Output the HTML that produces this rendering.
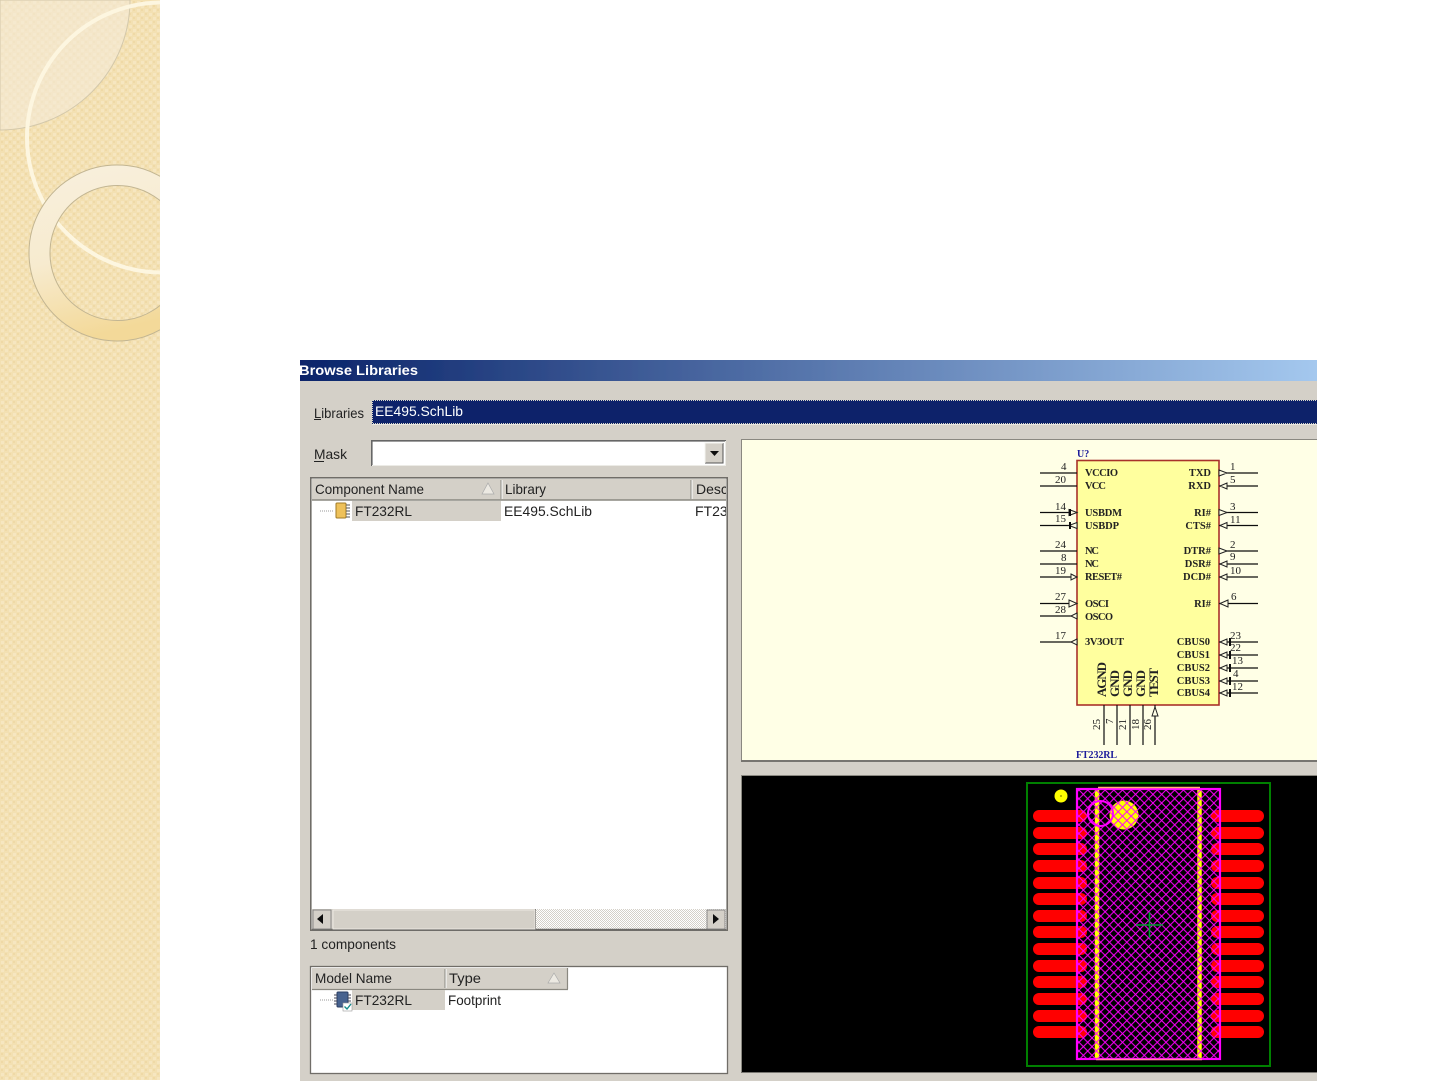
<!DOCTYPE html>
<html>
<head>
<meta charset="utf-8">
<title>Browse Libraries</title>
<style>
html,body{margin:0;padding:0;background:#fff;width:1440px;height:1081px;overflow:hidden}
svg{position:absolute;left:0;top:0;display:block}
.ui{font-family:"Liberation Sans",sans-serif;font-size:14px;fill:#222}
.sp{font-family:"Liberation Serif",serif;font-size:10.5px;font-weight:bold;fill:#222}
.n{font-family:"Liberation Serif",serif;font-size:11px;fill:#222}
</style>
</head>
<body>
<svg width="1440" height="1081" viewBox="0 0 1440 1081" xmlns="http://www.w3.org/2000/svg">
<defs>
<filter id="soft" filterUnits="userSpaceOnUse" x="290" y="350" width="1040" height="740"><feGaussianBlur stdDeviation="0.35"/></filter>
<pattern id="bg" width="8" height="8" patternUnits="userSpaceOnUse">
<rect width="8" height="8" fill="#f3e0b2"/>
<rect x="1" y="1" width="3" height="3" fill="#f6e6c0"/>
<rect x="5" y="5" width="3" height="3" fill="#f6e6c0"/>
<rect x="5" y="1" width="2" height="2" fill="#efd9a6"/>
<rect x="1" y="5" width="2" height="2" fill="#efd9a6"/>
</pattern>
<linearGradient id="ring" x1="0" y1="0" x2="0.25" y2="1">
<stop offset="0" stop-color="#f8f0de"/><stop offset=".55" stop-color="#f7ebcf"/><stop offset="1" stop-color="#f3d999"/>
</linearGradient>
<linearGradient id="title" x1="0" y1="0" x2="1" y2="0">
<stop offset="0" stop-color="#0a246a"/><stop offset="1" stop-color="#a6caf0"/>
</linearGradient>
<pattern id="hatch" width="8.7" height="8.7" patternUnits="userSpaceOnUse" x="1079" y="790">
<path d="M-1 -1L9.700 9.700M9.700 -1L-1 9.700" stroke="#f0f" stroke-width="1" fill="none"/>
</pattern>
<pattern id="dith" width="2" height="2" patternUnits="userSpaceOnUse">
<rect width="2" height="2" fill="#fff"/><rect width="1" height="1" fill="#d4d0c8"/><rect x="1" y="1" width="1" height="1" fill="#d4d0c8"/>
</pattern>
<clipPath id="side"><rect width="160" height="1080"/></clipPath>
<clipPath id="win"><rect x="300" y="360" width="1017" height="721"/></clipPath>
<clipPath id="list1"><rect x="312" y="479" width="414" height="430"/></clipPath>
</defs>

<!-- decorative side band -->
<g clip-path="url(#side)">
<rect width="160" height="1080" fill="url(#bg)"/>
<path d="M0 0H130A130 130 0 0 1 0 130Z" fill="#f3ead6" fill-opacity=".62" stroke="#d3c8ab" stroke-width="1"/>
<circle cx="162" cy="137.500" r="135" fill="none" stroke="#fdf6e0" stroke-width="4"/>
<path fill-rule="evenodd" d="M117 165a88 88 0 1 0 .01 0ZM117.500 185.500a67.500 67.500 0 1 1 -.01 0Z" fill="url(#ring)" stroke="#c2b592" stroke-width="1"/>
</g>

<g clip-path="url(#win)">
<rect x="300" y="360" width="1017" height="721" fill="#d4d0c8"/>
<g filter="url(#soft)">
<rect x="290" y="350" width="1040" height="31" fill="#0a246a"/>
<rect x="300" y="350" width="1030" height="31" fill="url(#title)"/>
<rect x="290" y="381" width="1040" height="710" fill="#d4d0c8"/>
<text x="299" y="375" font-family="Liberation Sans,sans-serif" font-size="14" font-weight="bold" fill="#fff" textLength="119" lengthAdjust="spacingAndGlyphs">Browse Libraries</text>

<!-- libraries -->
<text class="ui" x="314" y="418" textLength="50" lengthAdjust="spacingAndGlyphs">Libraries</text>
<rect x="314" y="419" width="7" height="1" fill="#222"/>
<rect x="372" y="400" width="960" height="24" fill="#0a246a"/>
<path d="M373 400.500H1330M372.500 400V424M373 423.500H1330" stroke="#d8d6c8" stroke-width="1" stroke-dasharray="1 1" fill="none"/>
<path d="M372 424.500H1330" stroke="#e9e7e0"/>
<text x="375" y="416" font-family="Liberation Sans,sans-serif" font-size="14" fill="#fff" textLength="88" lengthAdjust="spacingAndGlyphs">EE495.SchLib</text>

<!-- mask -->
<text class="ui" x="314" y="459" textLength="33" lengthAdjust="spacingAndGlyphs">Mask</text>
<rect x="314" y="461" width="10" height="1" fill="#222"/>
<rect x="371" y="440" width="355" height="26" fill="#fff"/>
<path d="M371.800 466V440.800H726" stroke="#666" stroke-width="1.600" fill="none"/>
<path d="M372 465.500H726M725.500 441V466" stroke="#ecebe6" fill="none"/>
<rect x="705" y="443" width="18" height="20" fill="#d4d0c8"/>
<path d="M723 443V463H705" stroke="#555" fill="none"/>
<path d="M705 463V443H723" stroke="#f5f4f0" fill="none"/>
<path d="M710 451H719L714.500 456Z" fill="#111"/>

<!-- components list -->
<rect x="310.800" y="477.800" width="416.400" height="452.400" fill="#fff" stroke="#6f6d68" stroke-width="1.600"/>
<rect x="312" y="479" width="414" height="21" fill="#d4d0c8"/>
<path d="M312 500H726" stroke="#8a8880" stroke-width="1.400"/>
<path d="M501 480V499M691 480V499" stroke="#8a8880"/>
<path d="M502 480V499M692 480V499" stroke="#fff"/>
<path d="M488 483L494 494H482Z" fill="#ece9e2" stroke="#aaa" stroke-width=".7"/>
<g clip-path="url(#list1)">
<text class="ui" x="315" y="494" textLength="109" lengthAdjust="spacingAndGlyphs">Component Name</text>
<text class="ui" x="505" y="494" textLength="41" lengthAdjust="spacingAndGlyphs">Library</text>
<text class="ui" x="696" y="494">Desc</text>
<rect x="352" y="501" width="149" height="20" fill="#d4d0c8"/>
<text class="ui" x="355" y="516" textLength="57" lengthAdjust="spacingAndGlyphs">FT232RL</text>
<text class="ui" x="504" y="516" textLength="88" lengthAdjust="spacingAndGlyphs">EE495.SchLib</text>
<text class="ui" x="695" y="516">FT232RL</text>
</g>
<path d="M320 511H333" stroke="#999" stroke-dasharray="1 1"/>
<rect x="336" y="503" width="10" height="15" rx="1" fill="#eec15a" stroke="#a07a25"/>
<path d="M346 505H350M346 508H350M346 511H350M346 514H350M346 517H350" stroke="#555"/>

<!-- scrollbar -->
<rect x="312" y="909" width="414" height="21" fill="url(#dith)"/>
<rect x="312" y="909" width="224" height="21" fill="#d4d0c8"/>
<path d="M535.500 909V930" stroke="#6c6a66"/>
<path d="M312 929.500H726" stroke="#6c6a66" stroke-width="1.600"/>
<rect x="313" y="910" width="18" height="19" fill="#d4d0c8" stroke="#777" stroke-width=".8"/>
<path d="M323 914V924L317 919Z" fill="#111"/>
<rect x="333" y="910" width="202" height="19" fill="#d4d0c8" stroke="#f0eee9" stroke-width=".8"/>
<rect x="707" y="910" width="18" height="19" fill="#d4d0c8" stroke="#777" stroke-width=".8"/>
<path d="M713 914V924L719 919Z" fill="#111"/>
<text class="ui" x="310" y="949" textLength="86" lengthAdjust="spacingAndGlyphs">1 components</text>

<!-- models list -->
<rect x="310.500" y="966.500" width="417" height="107" fill="#fff" stroke="#6f6d68" stroke-width="1.300"/>
<rect x="312" y="968" width="256" height="21" fill="#d4d0c8"/>
<path d="M312 989.500H568M567.500 968V989" stroke="#8a8880" stroke-width="1.200"/>
<path d="M445 969V988" stroke="#8a8880"/><path d="M446 969V988" stroke="#fff"/>
<path d="M554 973L560 983H548Z" fill="#ece9e2" stroke="#aaa" stroke-width=".7"/>
<text class="ui" x="315" y="983" textLength="77" lengthAdjust="spacingAndGlyphs">Model Name</text>
<text class="ui" x="449" y="983" textLength="32" lengthAdjust="spacingAndGlyphs">Type</text>
<rect x="352" y="990" width="93" height="20" fill="#d4d0c8"/>
<text class="ui" x="355" y="1005" textLength="57" lengthAdjust="spacingAndGlyphs">FT232RL</text>
<text class="ui" x="448" y="1005" textLength="53" lengthAdjust="spacingAndGlyphs">Footprint</text>
<path d="M320 1000H333" stroke="#999" stroke-dasharray="1 1"/>
<rect x="337" y="992" width="11" height="15" rx="1" fill="#47628f" stroke="#2b3d63"/>
<path d="M348 995H351M348 998H351M348 1001H351M348 1004H351M334 995H337M334 998H337M334 1001H337M334 1004H337" stroke="#445"/>
<rect x="343" y="1003" width="9" height="8" fill="#fff" stroke="#999" stroke-width=".6"/>
<path d="M344.500 1006.500L347 1009L351 1004" stroke="#128a8a" stroke-width="1.400" fill="none"/>

<!-- schematic panel -->
<rect x="741" y="439" width="600" height="322" fill="#ffffe6"/>
<path d="M741 439.500H1330M741.500 439V762" stroke="#8a8880"/>
<path d="M741 761H1330" stroke="#77756f" stroke-width="2"/>
<rect x="1077" y="460.500" width="142" height="244.500" fill="#ffff9e" stroke="#a8322a" stroke-width="1.600"/>
<text x="1077" y="457" font-family="Liberation Serif,serif" font-size="10" font-weight="bold" fill="#1a1a9a">U?</text>
<text x="1076" y="758" font-family="Liberation Serif,serif" font-size="10" font-weight="bold" fill="#1a1a9a" textLength="41">FT232RL</text>
<path d="M1040 473H1077M1040 486H1077M1040 512.500H1077M1040 525.500H1077M1040 551H1077M1040 564H1077M1040 577H1077M1040 603.500H1077M1040 616H1077M1040 642H1077M1219 473H1258M1219 486H1258M1219 512.500H1258M1219 525.500H1258M1219 551H1258M1219 564H1258M1219 577H1258M1219 603.500H1258M1219 642H1258M1219 655H1258M1219 668H1258M1219 681H1258M1219 693H1258M1104 705V745M1117 705V745M1130 705V745M1143 705V745M1155 705V745" stroke="#111" stroke-width="1.200" fill="none"/>
<!-- pin markers -->
<path d="M1069 509.500L1077 512.500L1069 515.500ZM1077 522.500L1069 525.500L1077 528.500ZM1071 574L1077 577L1071 580ZM1069 600L1077 603.500L1069 607ZM1077 613L1071 616L1077 619ZM1077 639L1071 642L1077 645ZM1219 470L1227 473L1219 476ZM1227 483L1220 486L1227 489ZM1219 509.500L1227 512.500L1219 515.500ZM1227 522.500L1220 525.500L1227 528.500ZM1219 548L1227 551L1219 554ZM1227 561L1220 564L1227 567ZM1227 574L1220 577L1227 580ZM1228 600L1220 603.500L1228 607ZM1227 639L1220 642L1227 645ZM1227 652L1220 655L1227 658ZM1227 665L1220 668L1227 671ZM1227 678L1220 681L1227 684ZM1227 690L1220 693L1227 696ZM1152 716L1155 707L1158 716Z" fill="#ffffe6" stroke="#222" stroke-width="1"/>
<path d="M1070 509V516M1070 522V529M1230 638V646M1230 651V659M1230 664V672M1230 677V685M1230 689V697" stroke="#111" stroke-width="2"/>
<!-- pin names -->
<text class="sp" x="1085" y="476" textLength="33">VCCIO</text>
<text class="sp" x="1085" y="489" textLength="21">VCC</text>
<text class="sp" x="1085" y="516" textLength="37">USBDM</text>
<text class="sp" x="1085" y="529" textLength="34">USBDP</text>
<text class="sp" x="1085" y="554" textLength="14">NC</text>
<text class="sp" x="1085" y="567" textLength="14">NC</text>
<text class="sp" x="1085" y="580" textLength="37">RESET#</text>
<text class="sp" x="1085" y="607" textLength="24">OSCI</text>
<text class="sp" x="1085" y="620" textLength="28">OSCO</text>
<text class="sp" x="1085" y="645" textLength="39">3V3OUT</text>
<text class="sp" x="1211" y="476" text-anchor="end">TXD</text>
<text class="sp" x="1211" y="489" text-anchor="end">RXD</text>
<text class="sp" x="1211" y="516" text-anchor="end">RI#</text>
<text class="sp" x="1211" y="529" text-anchor="end">CTS#</text>
<text class="sp" x="1211" y="554" text-anchor="end">DTR#</text>
<text class="sp" x="1211" y="567" text-anchor="end">DSR#</text>
<text class="sp" x="1211" y="580" text-anchor="end">DCD#</text>
<text class="sp" x="1211" y="607" text-anchor="end">RI#</text>
<text class="sp" x="1210" y="645" text-anchor="end">CBUS0</text>
<text class="sp" x="1210" y="658" text-anchor="end">CBUS1</text>
<text class="sp" x="1210" y="671" text-anchor="end">CBUS2</text>
<text class="sp" x="1210" y="684" text-anchor="end">CBUS3</text>
<text class="sp" x="1210" y="696" text-anchor="end">CBUS4</text>
<g style="font-family:'Liberation Serif',serif;font-size:13px;font-weight:bold;fill:#222">
<text transform="translate(1106 697) rotate(-90)" textLength="35">AGND</text>
<text transform="translate(1119 697) rotate(-90)" textLength="27">GND</text>
<text transform="translate(1132 697) rotate(-90)" textLength="27">GND</text>
<text transform="translate(1145 697) rotate(-90)" textLength="27">GND</text>
<text transform="translate(1158 697) rotate(-90)" textLength="29">TEST</text>
</g>
<!-- pin numbers -->
<text class="n" x="1061" y="470">4</text><text class="n" x="1055" y="483">20</text>
<text class="n" x="1055" y="510">14</text><text class="n" x="1055" y="522">15</text>
<text class="n" x="1055" y="548">24</text><text class="n" x="1061" y="561">8</text>
<text class="n" x="1055" y="574">19</text><text class="n" x="1055" y="600">27</text>
<text class="n" x="1055" y="613">28</text><text class="n" x="1055" y="639">17</text>
<text class="n" x="1230" y="470">1</text><text class="n" x="1230" y="483">5</text>
<text class="n" x="1230" y="510">3</text><text class="n" x="1230" y="523">11</text>
<text class="n" x="1230" y="548">2</text><text class="n" x="1230" y="560">9</text>
<text class="n" x="1230" y="574">10</text><text class="n" x="1231" y="600">6</text>
<text class="n" x="1230" y="639">23</text><text class="n" x="1230" y="651">22</text>
<text class="n" x="1232" y="664">13</text><text class="n" x="1233" y="677">4</text>
<text class="n" x="1232" y="690">12</text>
<text class="n" transform="translate(1100 730) rotate(-90)">25</text>
<text class="n" transform="translate(1113 724) rotate(-90)">7</text>
<text class="n" transform="translate(1126 730) rotate(-90)">21</text>
<text class="n" transform="translate(1139 730) rotate(-90)">18</text>
<text class="n" transform="translate(1151 730) rotate(-90)">26</text>

<!-- footprint panel -->
<rect x="741" y="775" width="600" height="297" fill="#000"/>
<path d="M741 775.500H1330M741.500 775V1073" stroke="#8a8880"/>
<path d="M741 1072.500H1330" stroke="#77756f"/>
<rect x="1027" y="783" width="243" height="283" fill="none" stroke="#008000" stroke-width="2"/>
<g fill="#f00">
<rect x="1033" y="810" width="54" height="12" rx="6"/><rect x="1033" y="827" width="54" height="12" rx="6"/>
<rect x="1033" y="843" width="54" height="12" rx="6"/><rect x="1033" y="860" width="54" height="12" rx="6"/>
<rect x="1033" y="877" width="54" height="12" rx="6"/><rect x="1033" y="893" width="54" height="12" rx="6"/>
<rect x="1033" y="910" width="54" height="12" rx="6"/><rect x="1033" y="926" width="54" height="12" rx="6"/>
<rect x="1033" y="943" width="54" height="12" rx="6"/><rect x="1033" y="960" width="54" height="12" rx="6"/>
<rect x="1033" y="976" width="54" height="12" rx="6"/><rect x="1033" y="993" width="54" height="12" rx="6"/>
<rect x="1033" y="1010" width="54" height="12" rx="6"/><rect x="1033" y="1026" width="54" height="12" rx="6"/>
<rect x="1211" y="810" width="53" height="12" rx="6"/><rect x="1211" y="827" width="53" height="12" rx="6"/>
<rect x="1211" y="843" width="53" height="12" rx="6"/><rect x="1211" y="860" width="53" height="12" rx="6"/>
<rect x="1211" y="877" width="53" height="12" rx="6"/><rect x="1211" y="893" width="53" height="12" rx="6"/>
<rect x="1211" y="910" width="53" height="12" rx="6"/><rect x="1211" y="926" width="53" height="12" rx="6"/>
<rect x="1211" y="943" width="53" height="12" rx="6"/><rect x="1211" y="960" width="53" height="12" rx="6"/>
<rect x="1211" y="976" width="53" height="12" rx="6"/><rect x="1211" y="993" width="53" height="12" rx="6"/>
<rect x="1211" y="1010" width="53" height="12" rx="6"/><rect x="1211" y="1026" width="53" height="12" rx="6"/>
</g>
<circle cx="1061" cy="796" r="6.500" fill="#ff0"/><circle cx="1061" cy="796" r="1" fill="#a0a000"/>
<circle cx="1124" cy="815" r="14.500" fill="#ff0"/>
<path d="M1097 788V1059M1199.500 788V1059" stroke="#ff0" stroke-width="4.500" fill="none"/>
<rect x="1077.500" y="789.500" width="142" height="269" fill="url(#hatch)"/>
<rect x="1077" y="789" width="143" height="270" fill="none" stroke="#f0f" stroke-width="2.200"/>
<path d="M1098 787.500H1200" stroke="#ffb070" stroke-width="1.500"/>
<path d="M1096 1059.500H1202" stroke="#ff80a0" stroke-width="1.500"/>
<circle cx="1100.500" cy="813.500" r="12.500" fill="none" stroke="#f0f" stroke-width="2"/>
<path d="M1136 925H1163M1149.500 912V938" stroke="#00a030" stroke-width="1.600"/>
</g>
</g>
</svg>
</body>
</html>
